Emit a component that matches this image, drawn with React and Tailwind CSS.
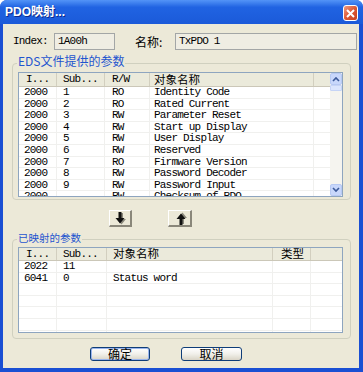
import React from 'react';

const M = "font-['Liberation_Mono','Noto_Sans_CJK_SC',monospace] text-[11px] tracking-[-0.8px] text-black";
const C = "font-['Noto_Sans_CJK_SC',sans-serif] text-black";

const eds = [
  ['2000', '1', 'RO', 'Identity Code'],
  ['2000', '2', 'RO', 'Rated Current'],
  ['2000', '3', 'RW', 'Parameter Reset'],
  ['2000', '4', 'RW', 'Start up Display'],
  ['2000', '5', 'RW', 'User Display'],
  ['2000', '6', 'RW', 'Reserved'],
  ['2000', '7', 'RO', 'Firmware Version'],
  ['2000', '8', 'RW', 'Password Decoder'],
  ['2000', '9', 'RW', 'Password Input'],
  ['2000', '', 'RW', 'Checksum of PDO'],
];

const mapped = [
  ['2022', '11', ''],
  ['6041', '0', 'Status word'],
  ['', '', ''],
  ['', '', ''],
  ['', '', ''],
  ['', '', ''],
  ['', '', ''],
];

function Chevron({ up }) {
  return (
    <svg width="8" height="6" viewBox="0 0 8 6">
      <path d={up ? 'M1 5 L4 2 L7 5' : 'M1 1 L4 4 L7 1'} fill="none" stroke="#3c5a9a" strokeWidth="1.6" />
    </svg>
  );
}

function Scrollbar() {
  return (
    <div className="w-[12px] shrink-0 flex flex-col bg-[#f5f4ef]">
      <div className="h-[12px] rounded-[2px] border border-[#b7c9f3] bg-[#c8d7fb] flex items-center justify-center">
        <Chevron up />
      </div>
      <div className="h-[6px] rounded-[1px] border border-[#c6d4f6] bg-[#dbe5fd]" />
      <div className="flex-1" />
      <div className="h-[12px] rounded-[2px] border border-[#b7c9f3] bg-[#c8d7fb] flex items-center justify-center">
        <Chevron />
      </div>
    </div>
  );
}

function Arrow({ up }) {
  return (
    <svg width="11" height="13" viewBox="0 0 11 13">
      <g transform={up ? 'translate(0 13) scale(1 -1)' : undefined}>
        <path d="M4 1 h3 v6 h3 l-4.5 5.5 l-4.5 -5.5 h3 z" fill="#8a887c" transform="translate(1 0)" />
        <path d="M3.5 0 h3 v6 h3 l-4.5 5.5 l-4.5 -5.5 h3 z" fill="#111" />
      </g>
    </svg>
  );
}

export default function App() {
  return (
    <div className="w-[363px] h-[372px] bg-white">
      <div className="w-full h-full flex flex-col bg-[#1a4fd3] rounded-t-[7px] overflow-hidden">
        {/* title bar */}
        <div className="h-[24px] shrink-0 flex items-center justify-between pl-[5px] pr-[5px] bg-gradient-to-b from-[#5394f7] via-[#2063e2] via-30% to-[#1b5ad9]">
          <span className="text-white font-bold text-[12px] font-['Liberation_Sans','Noto_Sans_CJK_SC',sans-serif] [text-shadow:1px_1px_0_#0c2a8c] leading-none">
            PDO映射...
          </span>
          <div className="mt-[2px] w-[15px] h-[16px] rounded-[3px] border border-white bg-gradient-to-br from-[#ee9a80] via-[#dc5834] to-[#c5401f] flex items-center justify-center">
            <svg width="9" height="9" viewBox="0 0 9 9">
              <path d="M1 1 L8 8 M8 1 L1 8" stroke="white" strokeWidth="2" />
            </svg>
          </div>
        </div>

        {/* body */}
        <div className="flex-1 ml-[3px] mr-[4px] mb-[4px] bg-[#ece9d8] flex flex-col">
          {/* index row */}
          <div className="mt-[9px] h-[17px] flex items-center shrink-0">
            <span className={`ml-[10px] w-[41px] ${M}`}>Index:</span>
            <div className="w-[61px] h-[17px] border border-[#a3a6a6] bg-[#efede3] flex items-center pl-[3px]">
              <span className={M}>1A00h</span>
            </div>
            <span className={`ml-[20px] w-[40px] text-[12px] ${C}`}>名称:</span>
            <div className="w-[182px] h-[17px] border border-[#a3a6a6] bg-[#efede3] flex items-center pl-[3px]">
              <span className={M}>TxPDO 1</span>
            </div>
          </div>

          {/* group 1 */}
          <div className="mt-[13px] ml-[9px] w-[339px] h-[137px] shrink-0 border border-[#d0d0bf] rounded-[4px] flex flex-col">
            <span className="-mt-[10px] ml-[4px] self-start px-[1px] bg-[#ece9d8] text-[#1f55cf] text-[12px] leading-[14px] font-['Noto_Sans_CJK_SC',sans-serif]">
              EDS文件提供的参数
            </span>
            <div className="ml-[5px] mt-[4px] w-[325px] h-[125px] border border-[#8ea5bf] bg-white flex">
              <div className="flex-1 flex flex-col">
                <div className="h-[14px] shrink-0 flex bg-[#ebeadb] border-b border-[#cbc7b8] leading-none">
                  <div className={`w-[38px] pl-[7px] flex items-center border-r border-[#d2cfbf] ${M}`}>I...</div>
                  <div className={`w-[48px] pl-[6px] flex items-center border-r border-[#d2cfbf] ${M}`}>Sub...</div>
                  <div className={`w-[45px] pl-[7px] flex items-center border-r border-[#d2cfbf] ${M}`}>R/W</div>
                  <div className={`w-[164px] pl-[4px] flex items-center border-r border-[#d2cfbf] text-[11.5px] leading-none ${C}`}>对象名称</div>
                  <div className="flex-1" />
                </div>
                <div className="flex-1 flex flex-col overflow-hidden">
                  {eds.map((r, i) => (
                    <div key={i} className={`h-[11.6px] shrink-0 flex border-b border-[#f0f0ee] leading-[11px] ${M}`}>
                      <div className="w-[38px] pl-[5px] border-r border-[#f0f0ee] whitespace-pre">{r[0]}</div>
                      <div className="w-[48px] pl-[6px] border-r border-[#f0f0ee] whitespace-pre">{r[1]}</div>
                      <div className="w-[45px] pl-[7px] border-r border-[#f0f0ee] whitespace-pre">{r[2]}</div>
                      <div className="w-[164px] pl-[4px] border-r border-[#f0f0ee] whitespace-pre">{r[3]}</div>
                      <div className="flex-1" />
                    </div>
                  ))}
                </div>
              </div>
              <Scrollbar />
            </div>
          </div>

          {/* arrow buttons */}
          <div className="mt-[10px] h-[17px] flex shrink-0">
            <div className="ml-[106px] w-[23px] h-[17px] border-t border-l border-white border-r-2 border-b-2 border-r-[#8a877a] border-b-[#8a877a] bg-[#ece9d8] flex items-center justify-center">
              <Arrow />
            </div>
            <div className="ml-[36px] w-[24px] h-[17px] border-t border-l border-white border-r-2 border-b-2 border-r-[#8a877a] border-b-[#8a877a] bg-[#ece9d8] flex items-center justify-center pl-[3px]">
              <Arrow up />
            </div>
          </div>

          {/* group 2 */}
          <div className="mt-[12px] ml-[9px] w-[339px] h-[100px] shrink-0 border border-[#d0d0bf] rounded-[4px] flex flex-col">
            <span className="-mt-[9px] ml-[4px] self-start px-[1px] bg-[#ece9d8] text-[#1f55cf] text-[10.5px] leading-[14px] font-['Noto_Sans_CJK_SC',sans-serif]">
              已映射的参数
            </span>
            <div className="ml-[5px] mt-[2px] w-[325px] h-[86px] border border-[#8ea5bf] bg-white flex flex-col">
              <div className="h-[13px] shrink-0 flex bg-[#ebeadb] border-b border-[#cbc7b8] leading-none">
                <div className={`w-[38px] pl-[7px] flex items-center border-r border-[#d2cfbf] ${M}`}>I...</div>
                <div className={`w-[50px] pl-[6px] flex items-center border-r border-[#d2cfbf] ${M}`}>Sub...</div>
                <div className={`w-[166px] pl-[6px] flex items-center border-r border-[#d2cfbf] text-[11.5px] leading-none ${C}`}>对象名称</div>
                <div className={`w-[38px] pl-[8px] flex items-center border-r border-[#d2cfbf] text-[11.5px] leading-none ${C}`}>类型</div>
                <div className="flex-1" />
              </div>
              <div className="flex-1 flex flex-col overflow-hidden">
                {mapped.map((r, i) => (
                  <div key={i} className={`h-[11.6px] shrink-0 flex border-b border-[#f0f0ee] leading-[11px] ${M}`}>
                    <div className="w-[38px] pl-[5px] border-r border-[#f0f0ee] whitespace-pre">{r[0]}</div>
                    <div className="w-[50px] pl-[6px] border-r border-[#f0f0ee] whitespace-pre">{r[1]}</div>
                    <div className="w-[166px] pl-[6px] border-r border-[#f0f0ee] whitespace-pre">{r[2]}</div>
                    <div className="w-[38px] border-r border-[#f0f0ee]" />
                    <div className="flex-1" />
                  </div>
                ))}
              </div>
            </div>
          </div>

          {/* bottom buttons */}
          <div className="mt-[8px] h-[14px] flex shrink-0">
            <div className="ml-[87px] w-[60px] h-[14px] rounded-[3px] border border-[#0f3d78] bg-gradient-to-b from-white via-[#f1f0ea] to-[#d9d4c6] shadow-[inset_0_0_0_1px_#9ab4ec] flex items-center justify-center">
              <span className={`text-[12px] leading-none ${C}`}>确定</span>
            </div>
            <div className="ml-[31px] w-[61px] h-[14px] rounded-[3px] border border-[#0f3d78] bg-gradient-to-b from-white via-[#f1f0ea] to-[#d9d4c6] flex items-center justify-center">
              <span className={`text-[12px] leading-none ${C}`}>取消</span>
            </div>
          </div>
        </div>
      </div>
    </div>
  );
}
